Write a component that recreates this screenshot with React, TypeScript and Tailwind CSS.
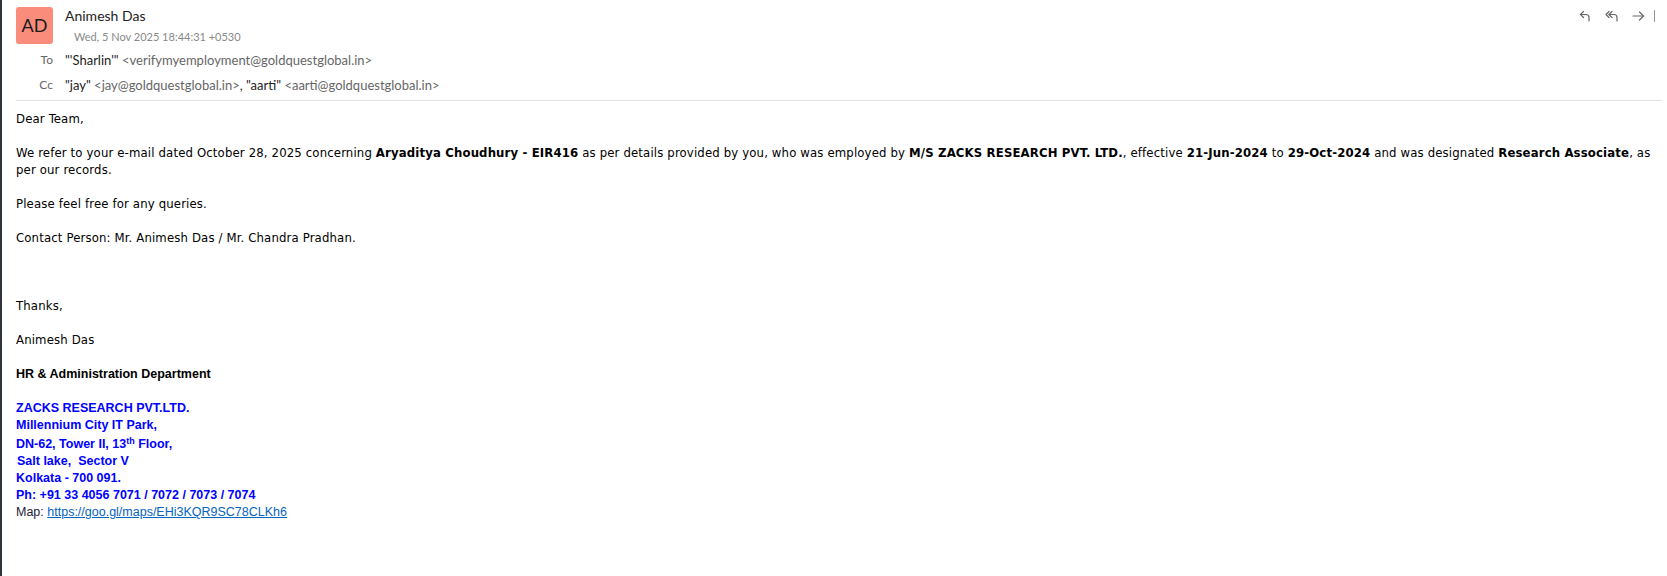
import React from "react";

const BODY_FONT = "font-['DejaVu_Sans_Condensed','DejaVu_Sans',Tahoma,sans-serif]";

function ReplyIcon() {
  return (
    <svg width="12" height="12" viewBox="0 0 12 12" fill="none" stroke="currentColor" strokeWidth="1.2" strokeLinecap="round" strokeLinejoin="round">
      <path d="M4.5 1.5 1.5 4.5l3 3" />
      <path d="M1.5 4.5h5.5a3 3 0 0 1 3 3v3.5" />
    </svg>
  );
}

function ReplyAllIcon() {
  return (
    <svg width="14" height="12" viewBox="0 0 14 12" fill="none" stroke="currentColor" strokeWidth="1.2" strokeLinecap="round" strokeLinejoin="round">
      <path d="M4 1.5 1 4.5l3 3" />
      <path d="M7 1.5 4 4.5l3 3" />
      <path d="M4 4.5h5a3 3 0 0 1 3 3v3.5" />
    </svg>
  );
}

function ForwardIcon() {
  return (
    <svg width="13" height="12" viewBox="0 0 13 12" fill="none" stroke="currentColor" strokeWidth="1.2" strokeLinecap="round" strokeLinejoin="round">
      <path d="M1 6h10.5" />
      <path d="M7.5 2l4 4-4 4" />
    </svg>
  );
}

function Header() {
  return (
    <div className="font-['Lato',sans-serif]">
      <div className="flex items-start pt-[7px]">
        <div className="w-[37px] h-[37px] rounded-[3px] bg-[#fa8c7c] flex items-center justify-center text-[18px] text-[#1a1a1a] shrink-0">
          AD
        </div>
        <div className="ml-3 flex-1">
          <div className="text-[14px] leading-[18px] text-[#222]">Animesh Das</div>
          <div className="ml-[9px] mt-[5px] text-[11px] leading-[14px] text-[#888]">
            Wed, 5 Nov 2025 18:44:31 +0530
          </div>
        </div>
        <div className="flex items-center text-[#666] pt-[3px] pr-[7px]">
          <ReplyIcon />
          <span className="ml-[14px]"><ReplyAllIcon /></span>
          <span className="ml-[13px]"><ForwardIcon /></span>
          <span className="ml-[9px] w-px h-[12px] bg-[#999]" />
        </div>
      </div>

      <div className="mt-[7px] flex flex-col gap-[7px] text-[13px] leading-[18px]">
        <div className="flex">
          <span className="w-[37px] text-right text-[12px] text-[#666]">To</span>
          <span className="ml-3 text-[#222]">
            "'Sharlin'" <span className="text-[#666]">&lt;verifymyemployment@goldquestglobal.in&gt;</span>
          </span>
        </div>
        <div className="flex">
          <span className="w-[37px] text-right text-[12px] text-[#666]">Cc</span>
          <span className="ml-3 text-[#222]">
            "jay" <span className="text-[#666]">&lt;jay@goldquestglobal.in&gt;</span>,{" "}
            "aarti" <span className="text-[#666]">&lt;aarti@goldquestglobal.in&gt;</span>
          </span>
        </div>
      </div>
    </div>
  );
}

function Body() {
  return (
    <div className="pt-[9px] pr-[5px] text-black">
      <div className={`${BODY_FONT} text-[13px] leading-[17px] tracking-[0.15px]`}>
        <p>Dear Team,</p>
        <p className="mt-[17px]">
          We refer to your e-mail dated October 28, 2025 concerning <b>Aryaditya Choudhury - EIR416</b> as per details
          provided by you, who was employed by <b>M/S ZACKS RESEARCH PVT. LTD.</b>, effective <b>21-Jun-2024</b> to{" "}
          <b>29-Oct-2024</b> and was designated <b>Research Associate</b>, as per our records.
        </p>
        <p className="mt-[17px]">Please feel free for any queries.</p>
        <p className="mt-[17px]">Contact Person: Mr. Animesh Das / Mr. Chandra Pradhan.</p>
        <p className="mt-[51px]">Thanks,</p>
        <p className="mt-[17px]">Animesh Das</p>
      </div>
      <p className="mt-[18px] font-['Liberation_Sans',Arial,sans-serif] font-bold text-[12.5px] leading-[17px]">
        HR &amp; Administration Department
      </p>

      <div className="mt-[17px] font-['Liberation_Sans',Arial,sans-serif] text-[12.5px] leading-[17px]">
        <div className="font-bold text-[#0000ff]">
          <div>ZACKS RESEARCH PVT.LTD.</div>
          <div>Millennium City IT Park,</div>
          <div className="pt-[2px]">
            DN-62, Tower II, 13<sup className="text-[9px] leading-none">th</sup> Floor,
          </div>
          <div className="pl-px">Salt lake,&nbsp; Sector V</div>
          <div>Kolkata - 700 091.</div>
          <div>Ph: +91 33 4056 7071 / 7072 / 7073 / 7074</div>
        </div>
        <div className="text-[#1f2236]">
          Map:{" "}
          <a href="#" className="text-[#0563c1] underline">
            https://goo.gl/maps/EHi3KQR9SC78CLKh6
          </a>
        </div>
      </div>
    </div>
  );
}

export default function App() {
  return (
    <div className="min-h-[576px] bg-white border-l-2 border-[#2e3440] pl-[14px] pr-[5px]">
      <Header />
      <div className="mt-[6px] border-t border-[#e3e3e3]" />
      <Body />
    </div>
  );
}
